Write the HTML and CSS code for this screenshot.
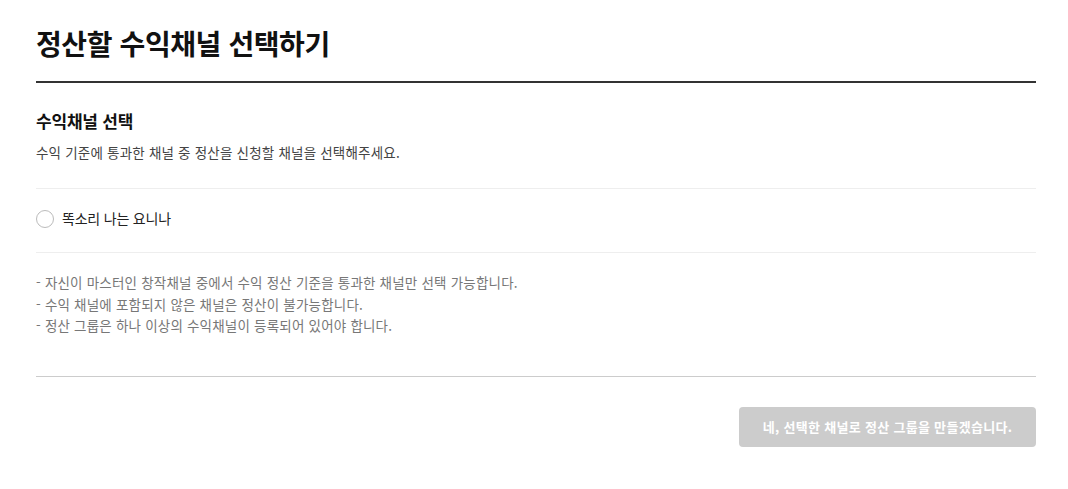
FILE: index.html
```html
<!DOCTYPE html>
<html lang="ko">
<head>
    <meta charset="UTF-8" />
    <meta name="viewport" content="width=device-width, initial-scale=1" />
    <title>정산할 수익채널 선택하기</title>
    <link rel="stylesheet" href="styles.css">
</head>
<body>
    <div class="page">
        <header class="page-header">
            <h1>정산할 수익채널 선택하기</h1>
        </header>

        <section class="intro">
            <h2>수익채널 선택</h2>
            <p>수익 기준에 통과한 채널 중 정산을 신청할 채널을 선택해주세요.</p>
        </section>

        <ul class="channel-list">
            <li>
                <label class="radio">
                    <input type="radio" name="channel" value="1" />
                    <span class="mark"></span>
                    <span class="name">똑소리 나는 요니나</span>
                </label>
            </li>
        </ul>

        <ul class="notes">
            <li>- 자신이 마스터인 창작채널 중에서 수익 정산 기준을 통과한 채널만 선택 가능합니다.</li>
            <li>- 수익 채널에 포함되지 않은 채널은 정산이 불가능합니다.</li>
            <li>- 정산 그룹은 하나 이상의 수익채널이 등록되어 있어야 합니다.</li>
        </ul>

        <div class="actions">
            <button type="button" disabled>네, 선택한 채널로 정산 그룹을 만들겠습니다.</button>
        </div>
    </div>
</body>
</html>
```

FILE: styles.css
```css
* {
    box-sizing: border-box;
}

body {
    margin: 0;
    padding: 0;
    background: #fff;
    color: #111;
    font-family: "Noto Sans CJK KR", "Noto Sans", sans-serif;
}

.page {
    width: 1000px;
    margin-left: 36px;
}

.page-header {
    padding-top: 23px;
    height: 83px;
    border-bottom: 2px solid #333;
}

h1 {
    margin: 0;
    font-size: 28px;
    line-height: 40px;
    font-weight: 700;
    letter-spacing: -0.4px;
}

.intro {
    padding: 26px 0 26px;
    border-bottom: 1px solid #eee;
}

h2 {
    margin: 0 0 9px;
    font-size: 17px;
    line-height: 24px;
    font-weight: 700;
    letter-spacing: -0.2px;
}

.intro p {
    margin: 0;
    font-size: 13.5px;
    line-height: 20px;
    letter-spacing: 0.2px;
    color: #444;
}

.channel-list {
    list-style: none;
    margin: 0;
    padding: 0;
    border-bottom: 1px solid #eee;
}

.channel-list li {
    padding: 20px 0 24px;
}

.radio {
    display: flex;
    align-items: center;
    gap: 8px;
    cursor: pointer;
}

.radio input {
    display: none;
}

.mark {
    width: 18px;
    height: 18px;
    border: 1px solid #bbb;
    border-radius: 50%;
    background: #fff;
}

.radio input:checked + .mark {
    border: 5px solid #333;
}

.name {
    font-size: 14px;
    line-height: 19px;
    letter-spacing: -0.2px;
    color: #222;
}

.notes {
    list-style: none;
    margin: 0;
    padding: 19px 0 39px;
    border-bottom: 1px solid #ccc;
}

.notes li {
    font-size: 13.5px;
    line-height: 21.5px;
    letter-spacing: 0.2px;
    color: #777;
}

.actions {
    display: flex;
    justify-content: flex-end;
    padding-top: 30px;
}

button {
    width: 297px;
    height: 40px;
    border: none;
    border-radius: 4px;
    background-color: #ccc;
    color: #fff;
    font-family: inherit;
    font-size: 13px;
    font-weight: 700;
    letter-spacing: 0.3px;
    cursor: default;
}
```
